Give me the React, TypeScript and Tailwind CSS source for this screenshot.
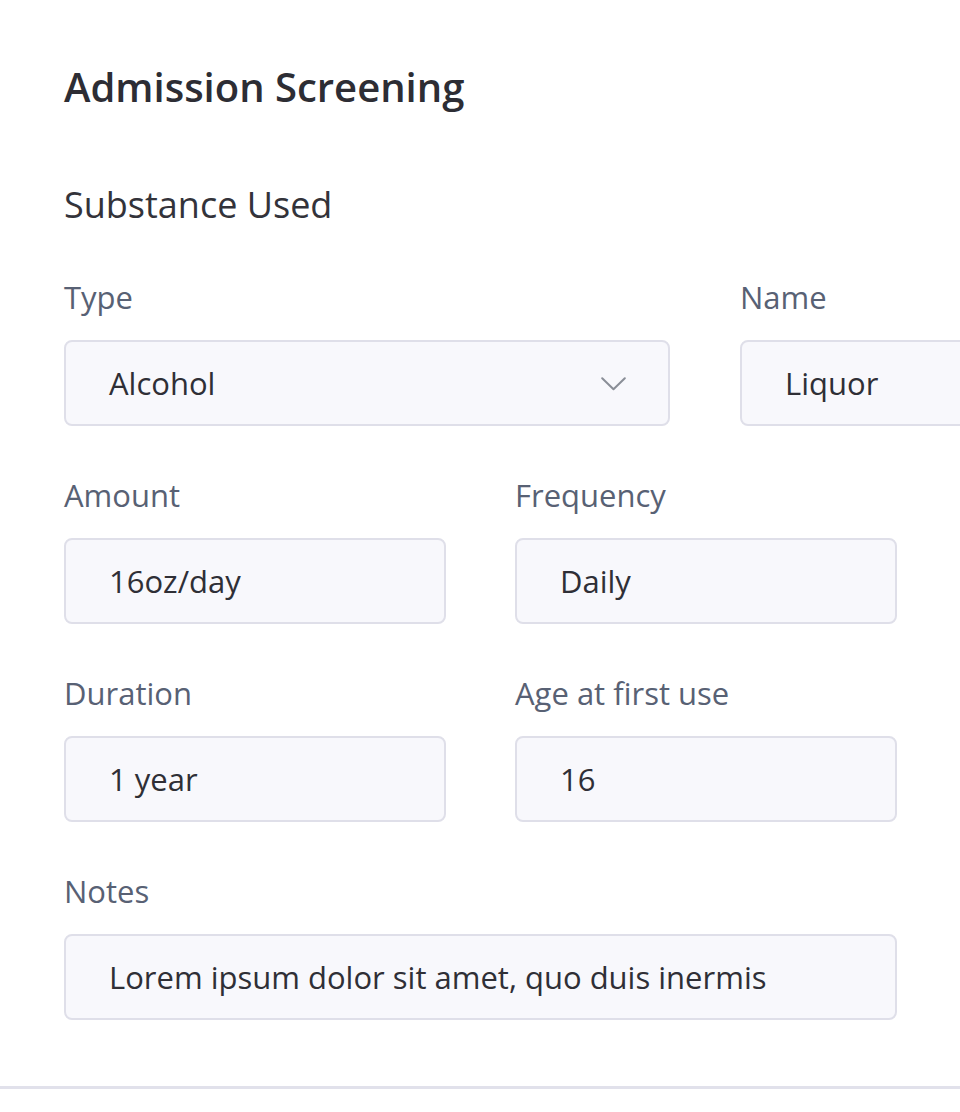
interface FieldProps {
  label: string
  value: string
  width: string
  select?: boolean
}

function Field({ label, value, width, select }: FieldProps) {
  return (
    <div className={`${width} shrink-0`}>
      <div className="h-[40px] text-[31px] leading-[40px] text-[#586174] whitespace-nowrap">{label}</div>
      <div className="mt-[23px] h-[86px] flex items-center justify-between pl-[43px] pr-[42px] bg-[#f8f8fc] border-2 border-[#dfdfe9] rounded-[8px]">
        <span className="text-[31px] text-[#2f2f36] whitespace-nowrap">{value}</span>
        {select && (
          <svg width="25" height="14" viewBox="0 0 25 14" fill="none" className="shrink-0 mt-[2px]">
            <polyline points="1.2,1.2 12.5,12.3 23.8,1.2" stroke="#8a8e97" strokeWidth="2" strokeLinecap="round" strokeLinejoin="round" />
          </svg>
        )}
      </div>
    </div>
  )
}

export default function App() {
  return (
    <div
      className="w-[960px] h-[1112px] overflow-hidden bg-white"
      style={{ fontFamily: '"Open Sans", "Noto Sans", sans-serif' }}
    >
      <div className="pl-[64px] pt-[62px]">
        <h1 className="h-[50px] text-[40px] leading-[50px] font-semibold text-[#2d2d34] whitespace-nowrap">
          Admission Screening
        </h1>
        <h2 className="mt-[71px] h-[44px] text-[36px] leading-[44px] text-[#33333a] whitespace-nowrap">
          Substance Used
        </h2>

        <div className="mt-[50px] flex gap-[70px]">
          <Field label="Type" value="Alcohol" width="w-[606px]" select />
          <Field label="Name" value="Liquor" width="w-[380px]" />
        </div>

        <div className="mt-[49px] flex gap-[69px]">
          <Field label="Amount" value="16oz/day" width="w-[382px]" />
          <Field label="Frequency" value="Daily" width="w-[382px]" />
        </div>

        <div className="mt-[49px] flex gap-[69px]">
          <Field label="Duration" value="1 year" width="w-[382px]" />
          <Field label="Age at first use" value="16" width="w-[382px]" />
        </div>

        <div className="mt-[49px] flex">
          <Field label="Notes" value="Lorem ipsum dolor sit amet, quo duis inermis" width="w-[833px]" />
        </div>
      </div>

      <div className="mt-[66px] h-[3px] bg-[#e1e1eb]" />
    </div>
  )
}
